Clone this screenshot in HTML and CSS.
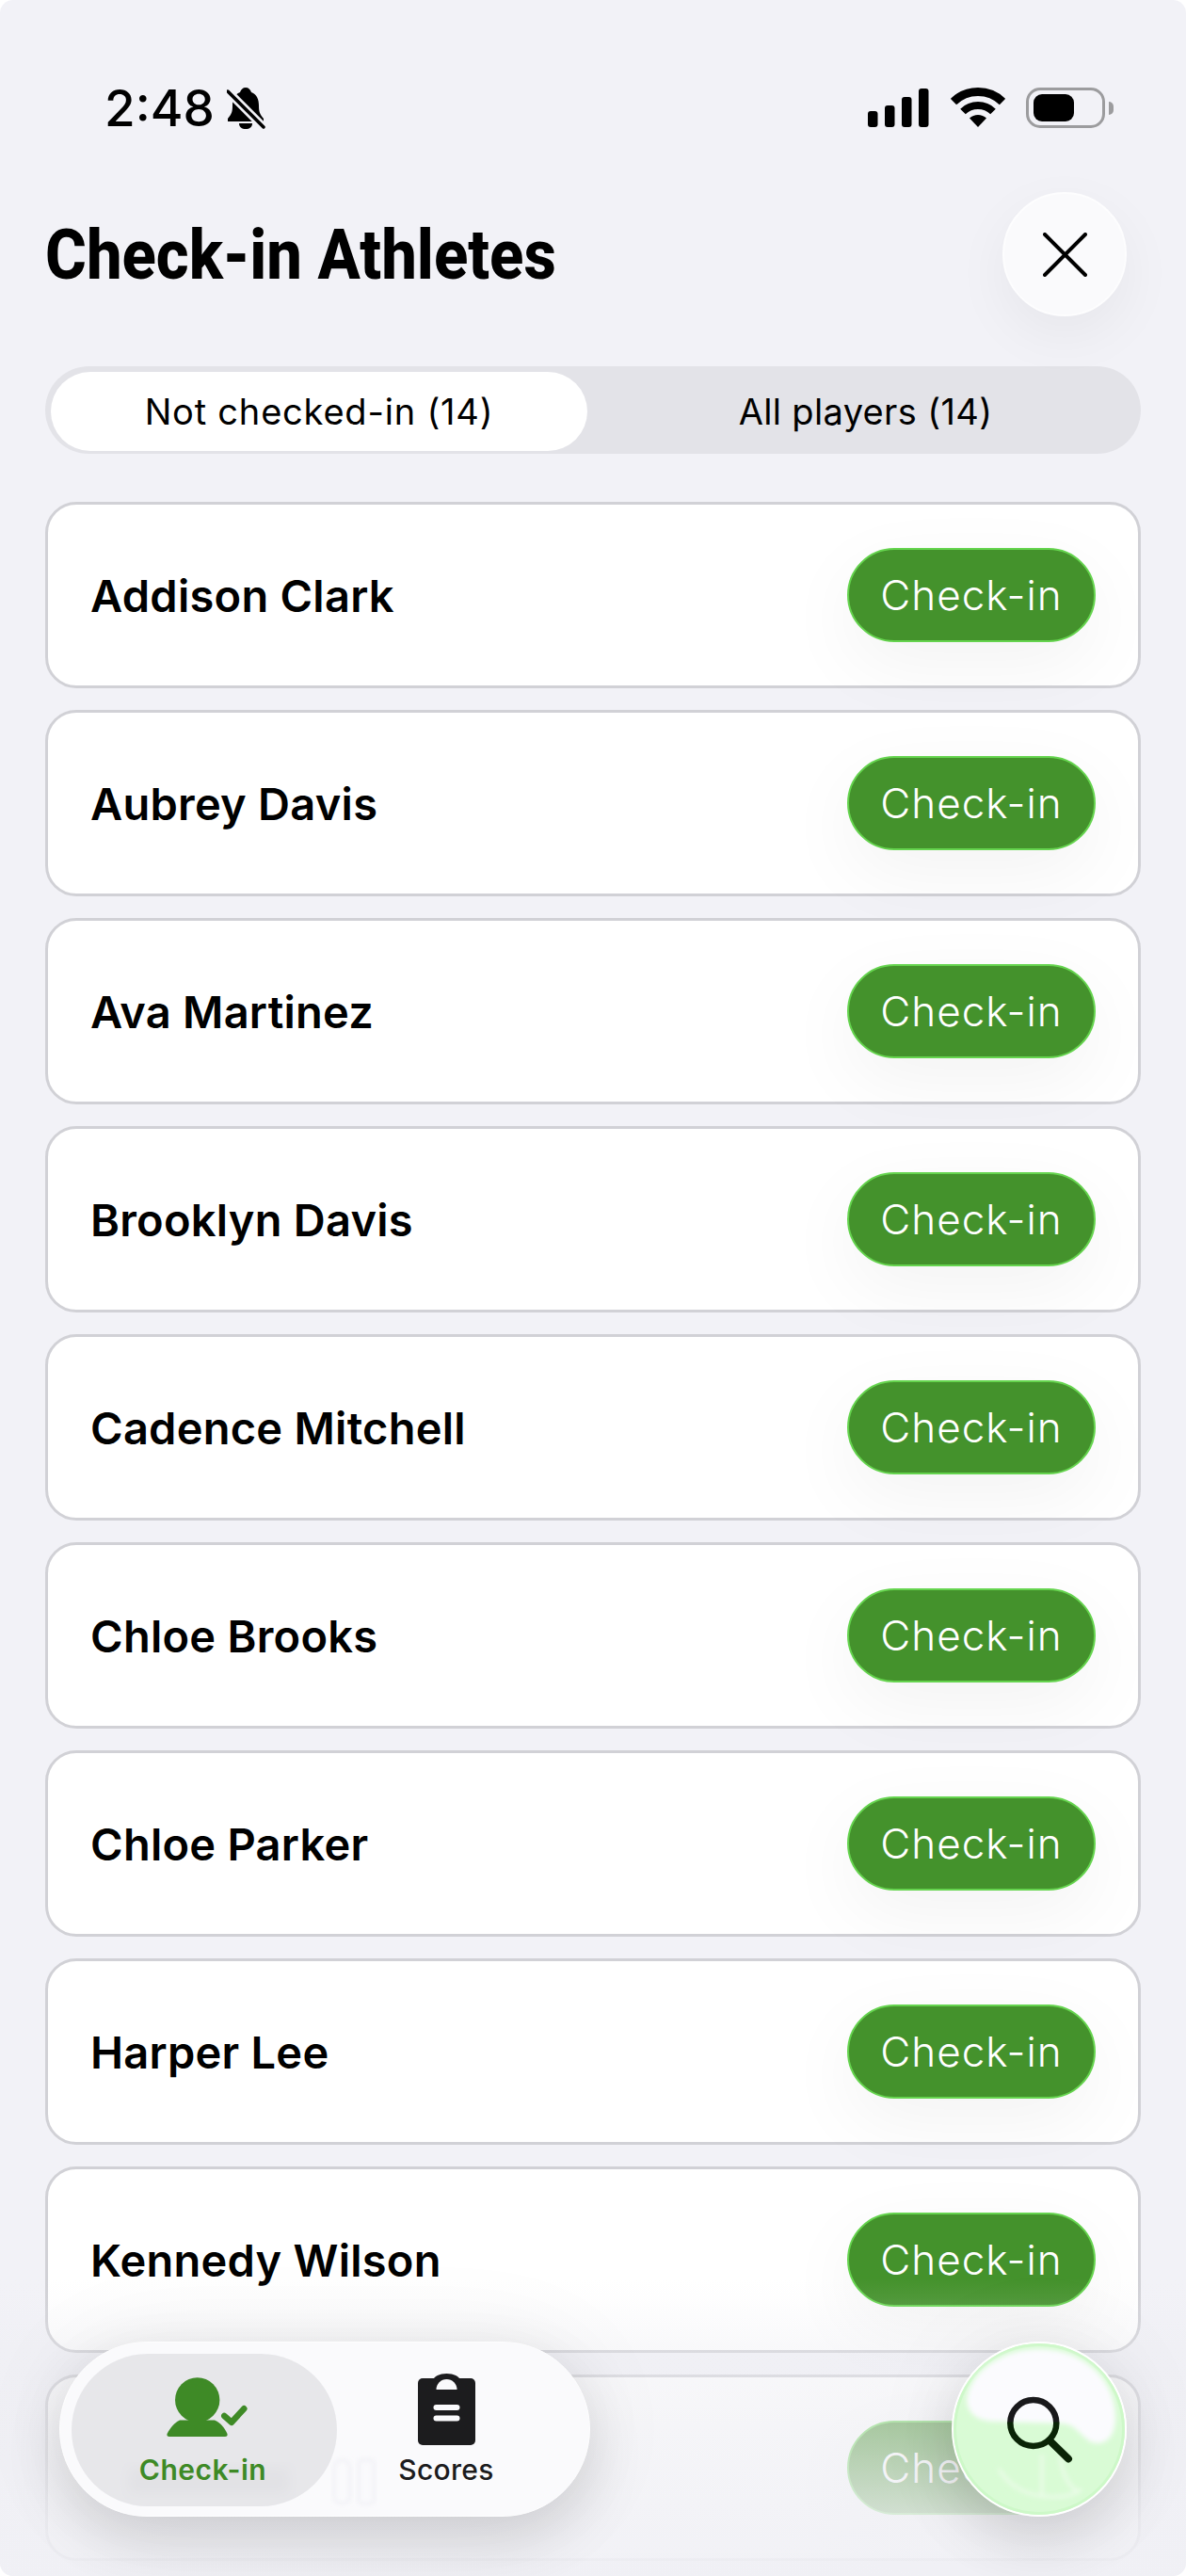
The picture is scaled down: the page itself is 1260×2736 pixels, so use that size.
FILE: index.html
```html
<!DOCTYPE html>
<html lang="en">
    <head>
        <meta charset="UTF-8">
        <meta name="viewport" content="width=device-width, initial-scale=1.0">
        <title>Check-in Athletes</title>
        <link rel="stylesheet" href="styles.css">
    </head>
    <body>
        <div class="screen">
            <div class="status-bar">
                <div class="status-left">
                    <span class="time">2:48</span>
                    <svg class="bell" width="42" height="44" viewBox="0 0 42 44">
                        <path d="M20 0c3 0 5 2 6 5 6 2 8 8 8 14 0 7 1 9 5 14v3H1v-3c4-5 5-7 5-14 0-6 2-12 8-14 1-3 3-5 6-5z" fill="#000"/>
                        <path d="M13 38h14c0 4-3 6-7 6s-7-2-7-6z" fill="#000"/>
                        <path d="M2 5l37 37" stroke="#f2f2f7" stroke-width="9"/>
                        <path d="M1 4l38 38" stroke="#000" stroke-width="3.5" stroke-linecap="round"/>
                    </svg>
                </div>
                <div class="status-right">
                    <svg width="65" height="41" viewBox="0 0 65 41">
                        <rect x="0" y="24" width="10.5" height="17" rx="3"/>
                        <rect x="18" y="18" width="10.5" height="23" rx="3"/>
                        <rect x="36" y="9" width="10.5" height="32" rx="3"/>
                        <rect x="54" y="0" width="10.5" height="41" rx="3"/>
                    </svg>
                    <svg class="wifi" width="58" height="42" viewBox="0 0 58 42">
                        <path d="M3 15A37.5 37.5 0 0 1 55 15" fill="none" stroke="#000" stroke-width="9"/>
                        <path d="M13 25.5A23 23 0 0 1 45 25.5" fill="none" stroke="#000" stroke-width="8"/>
                        <path d="M29 42L20 32.6A13 13 0 0 1 38 32.6Z"/>
                    </svg>
                    <div class="battery"><div class="battery-fill"></div></div>
                    <div class="battery-nub"></div>
                </div>
            </div>

            <header class="page-header">
                <h1>Check-in Athletes</h1>
                <button class="close-btn">
                    <svg width="47" height="47" viewBox="0 0 47 47">
                        <path d="M2 2l43 43M45 2L2 45" stroke="#000" stroke-width="4" stroke-linecap="round"/>
                    </svg>
                </button>
            </header>

            <div class="tabs">
                <div class="tab tab-active">Not checked-in (14)</div>
                <div class="tab">All players (14)</div>
            </div>

            <div class="player-list">
                <div class="player-card"><span class="player-name">Addison Clark</span><button class="checkin-btn">Check-in</button></div>
                <div class="player-card"><span class="player-name">Aubrey Davis</span><button class="checkin-btn">Check-in</button></div>
                <div class="player-card"><span class="player-name">Ava Martinez</span><button class="checkin-btn">Check-in</button></div>
                <div class="player-card"><span class="player-name">Brooklyn Davis</span><button class="checkin-btn">Check-in</button></div>
                <div class="player-card"><span class="player-name">Cadence Mitchell</span><button class="checkin-btn">Check-in</button></div>
                <div class="player-card"><span class="player-name">Chloe Brooks</span><button class="checkin-btn">Check-in</button></div>
                <div class="player-card"><span class="player-name">Chloe Parker</span><button class="checkin-btn">Check-in</button></div>
                <div class="player-card"><span class="player-name">Harper Lee</span><button class="checkin-btn">Check-in</button></div>
                <div class="player-card"><span class="player-name">Kennedy Wilson</span><button class="checkin-btn">Check-in</button></div>
                <!-- name of this row is hidden behind the tab bar -->
                <div class="player-card player-card-end"><button class="checkin-btn">Check-in</button></div>
            </div>

            <div class="bottom-fade"></div>

            <nav class="bottom-nav">
                <!-- smeared row underneath the glass -->
                <svg class="nav-ghost" width="564" height="186" viewBox="0 0 564 186">
                    <defs>
                        <filter id="smear" x="-20%" y="-20%" width="140%" height="140%"><feGaussianBlur stdDeviation="6"/></filter>
                        <filter id="smear-small" x="-20%" y="-20%" width="140%" height="140%"><feGaussianBlur stdDeviation="2"/></filter>
                    </defs>
                    <rect x="74" y="134" width="170" height="28" fill="#d2d2d6" filter="url(#smear)"/>
                    <rect x="292" y="126" width="17" height="46" rx="8" fill="none" stroke="#f3f3f7" stroke-width="4" filter="url(#smear-small)"/>
                    <rect x="318" y="126" width="16" height="46" rx="3" fill="none" stroke="#f3f3f7" stroke-width="4" filter="url(#smear-small)"/>
                </svg>
                <a class="nav-item nav-item-active">
                    <svg class="person-icon" width="90" height="76" viewBox="0 0 90 76">
                        <circle cx="32.7" cy="28" r="23.7"/>
                        <path d="M0.5 64C4 57 9 52 14 49.5L51 49.5c5.500 2.500 10.500 7.500 13.500 14.500 .5 2-.5 3-2.500 3H3c-2 0-3-1-2.500-3z"/>
                        <path d="M61.300 45l7.700 6.700L82.300 37.300" fill="none" stroke="#3e8a26" stroke-width="6.500" stroke-linecap="round" stroke-linejoin="round"/>
                    </svg>
                    <span>Check-in</span>
                </a>
                <a class="nav-item nav-item-scores">
                    <svg width="61" height="76" viewBox="0 0 61 76">
                        <rect x="0" y="5" width="61" height="71" rx="5"/>
                        <path d="M16 7C17 3 23 0 30.500 0S44 3 45 7z"/>
                        <path d="M19.500 17A11 11 0 0 1 41.500 17Z" fill="#fafafc"/>
                        <rect x="16.500" y="33" width="28" height="6" rx="3" fill="#fafafc"/>
                        <rect x="16.500" y="44.500" width="28" height="6" rx="3" fill="#fafafc"/>
                    </svg>
                    <span>Scores</span>
                </a>
            </nav>

            <button class="search-btn">
                <svg width="186" height="186" viewBox="0 0 186 186">
                    <defs>
                        <filter id="soft" x="-10%" y="-10%" width="120%" height="120%"><feGaussianBlur stdDeviation="2.500"/></filter>
                        <linearGradient id="lens" gradientUnits="userSpaceOnUse" x1="0" y1="0" x2="0" y2="186">
                            <stop offset="0.455" stop-color="#19191b"/>
                            <stop offset="0.465" stop-color="#0a2406"/>
                        </linearGradient>
                    </defs>
                    <circle cx="93" cy="93" r="92" fill="#d9fbd5" stroke="#fff" stroke-width="2"/>
                    <circle cx="93" cy="93" r="89.500" fill="none" stroke="#cdf8c8" stroke-width="3"/>
                    <path d="M16 62C20 30 55 8 93 8c42 0 79 27 81 70 1 17-6 30-19 30-15 0-20-20-37-21L50 85C30 85 18 80 16 62z" fill="#fbfbfe" filter="url(#soft)"/>
                    <path d="M50 135c10 18 30 30 58 30 14 0 22-2 30-8M96 120v44M116 122c0 15 6 28 18 38" fill="none" stroke="#eefcec" stroke-width="3" filter="url(#soft)"/>
                    <circle cx="86.800" cy="86.500" r="24.500" fill="none" stroke="url(#lens)" stroke-width="6.500"/>
                    <path d="M104 105l20 19.500" stroke="url(#lens)" stroke-width="8" stroke-linecap="round"/>
                </svg>
            </button>
        </div>
    </body>
</html>
```

FILE: styles.css
```css
body {
    margin: 0;
    padding: 0;
    background-color: #fff;
    font-family: 'Inter', 'Liberation Sans', sans-serif;
}

button {
    font-family: inherit;
    border: none;
    padding: 0;
}

.screen {
    position: relative;
    width: 1260px;
    height: 2736px;
    overflow: hidden;
    background-color: #f2f2f7;
    border-radius: 14px;
}

/* status bar */
.status-bar {
    display: flex;
    justify-content: space-between;
    align-items: flex-start;
    padding: 93px 77px 0 111px;
    height: 44px;
}

.status-left {
    display: flex;
    align-items: flex-start;
    gap: 13px;
}

.time {
    font-size: 53px;
    font-weight: 500;
    line-height: 44px;
    color: #000;
}

.status-right {
    display: flex;
    align-items: flex-start;
    gap: 23px;
}

.status-right svg {
    margin-top: 1px;
}

.status-right .wifi {
    margin-top: 0;
}

.battery {
    width: 84px;
    height: 43px;
    box-sizing: border-box;
    border: 3px solid #9c9c9e;
    border-radius: 15px;
    padding: 4px 5px;
    margin-left: -1px;
}

.battery-fill {
    width: 43px;
    height: 29px;
    background-color: #000;
    border-radius: 9px;
}

.battery-nub {
    width: 5px;
    height: 14px;
    margin: 15px 0 0 -19px;
    background-color: #9c9c9e;
    border-radius: 0 7px 7px 0;
}

/* title row */
.page-header {
    display: flex;
    justify-content: space-between;
    align-items: center;
    margin-top: 67px;
    padding: 0 63px 0 48px;
}

h1 {
    margin: 0;
    font-family: 'Roboto', 'Liberation Sans', sans-serif;
    font-size: 74px;
    font-weight: 800;
    color: #000;
    transform: scaleX(0.905);
    transform-origin: left center;
}

.close-btn {
    display: flex;
    align-items: center;
    justify-content: center;
    width: 132px;
    height: 132px;
    border-radius: 50%;
    background-color: #fafafc;
    border: 2px solid #fdfdfe;
    box-shadow: 0 20px 60px rgba(0, 0, 0, 0.05);
}

/* segmented control */
.tabs {
    display: flex;
    height: 93px;
    box-sizing: border-box;
    margin: 53px 48px 0;
    padding: 6px 0 3px 6px;
    background-color: #e3e3e8;
    border-radius: 47px;
}

.tab {
    flex: 1;
    display: flex;
    align-items: center;
    justify-content: center;
    padding-left: 3px;
    font-size: 38px;
    letter-spacing: 0.35px;
    color: #000;
}

.tab-active {
    flex: 0 0 570px;
    padding-left: 0;
    letter-spacing: 0.8px;
    background-color: #fff;
    border-radius: 42px;
}

/* list */
.player-list {
    display: flex;
    flex-direction: column;
    gap: 23px;
    margin: 51px 48px 0;
}

.player-card {
    display: flex;
    justify-content: space-between;
    align-items: center;
    flex: 0 0 198px;
    box-sizing: border-box;
    padding: 0 45px;
    background-color: #fff;
    border: 3px solid #d1d1d6;
    border-radius: 33px;
}

.player-card-end {
    justify-content: flex-end;
}

.player-name {
    font-size: 47px;
    font-weight: 600;
    letter-spacing: 0.25px;
    color: #000;
}

.checkin-btn {
    width: 264px;
    height: 100px;
    box-sizing: border-box;
    background-color: #44922c;
    border: 2px solid #65d44e;
    border-radius: 50px;
    color: #fff;
    font-size: 44px;
    font-weight: 300;
    letter-spacing: 1px;
    box-shadow: 0 24px 80px rgba(0, 0, 0, 0.05);
}

/* fade under the floating controls */
.bottom-fade {
    position: absolute;
    left: 0;
    right: 0;
    top: 2420px;
    bottom: 0;
    background: linear-gradient(to bottom,
        rgba(238, 238, 243, 0) 0,
        rgba(238, 238, 243, 0.06) 20px,
        rgba(236, 236, 241, 0.34) 75px,
        rgba(238, 238, 243, 0.58) 152px,
        rgba(240, 240, 245, 0.82) 250px,
        rgba(240, 240, 245, 0.92) 316px);
}

/* floating tab bar */
.bottom-nav {
    position: absolute;
    left: 63px;
    bottom: 63px;
    display: flex;
    width: 564px;
    height: 186px;
    box-sizing: border-box;
    padding: 12px;
    background-color: #fafafc;
    border: 1px solid #fdfdfe;
    border-radius: 93px;
    box-shadow: 0 24px 60px rgba(0, 0, 0, 0.13), 0 0 110px rgba(0, 0, 0, 0.06);
}

.nav-ghost {
    position: absolute;
    left: -1px;
    top: -1px;
}

.nav-item {
    position: relative;
    display: flex;
    flex-direction: column;
    align-items: center;
    box-sizing: border-box;
    height: 162px;
    padding-top: 21px;
    gap: 8px;
    font-size: 30px;
    font-weight: 500;
    letter-spacing: 0.3px;
    color: #1c1c1e;
}

.nav-item-active {
    width: 282px;
    padding-right: 3px;
    background-color: rgba(228, 228, 231, 0.88);
    border-radius: 81px;
    color: #3e8a26;
    font-weight: 600;
    letter-spacing: 0.5px;
    fill: #3e8a26;
}

.person-icon {
    margin-left: 13px;
}

.nav-item-scores {
    width: 232px;
    fill: #1c1c1e;
}

/* floating search */
.search-btn {
    position: absolute;
    right: 63px;
    bottom: 63px;
    width: 186px;
    height: 186px;
    border-radius: 50%;
    background: none;
    box-shadow: 0 24px 60px rgba(0, 0, 0, 0.13), 0 0 110px rgba(0, 0, 0, 0.06);
}

.search-btn svg {
    display: block;
}
```
